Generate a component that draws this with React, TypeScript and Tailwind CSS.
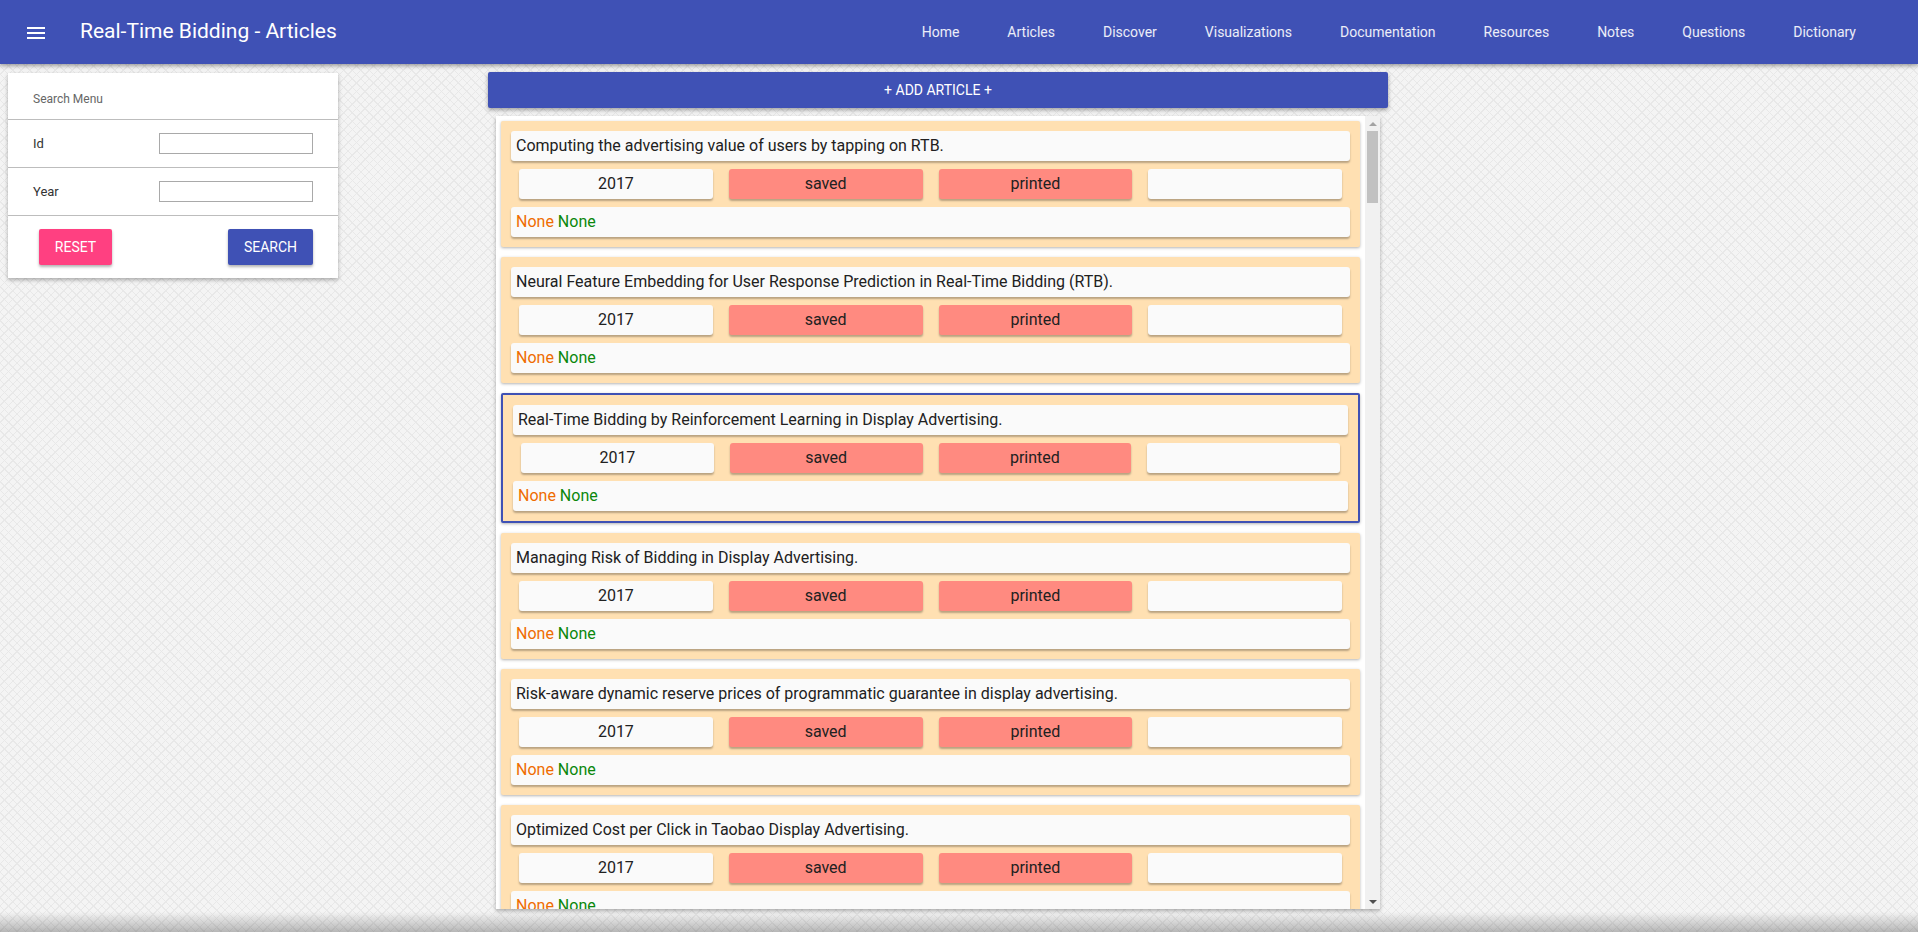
const navLinks = [
  'Home',
  'Articles',
  'Discover',
  'Visualizations',
  'Documentation',
  'Resources',
  'Notes',
  'Questions',
  'Dictionary',
];

const articles = [
  'Computing the advertising value of users by tapping on RTB.',
  'Neural Feature Embedding for User Response Prediction in Real-Time Bidding (RTB).',
  'Real-Time Bidding by Reinforcement Learning in Display Advertising.',
  'Managing Risk of Bidding in Display Advertising.',
  'Risk-aware dynamic reserve prices of programmatic guarantee in display advertising.',
  'Optimized Cost per Click in Taobao Display Advertising.',
  'Bid Landscape Forecasting in Online Ad Exchange Marketplace.',
];

const Box = ({ children }: { children?: React.ReactNode }) => (
  <div className="h-[30px] bg-[#fafafa] rounded-[3px] shadow-[0_2px_2px_rgba(0,0,0,0.28)] px-[5px] flex items-center text-[16px] text-[#212121] whitespace-nowrap overflow-hidden">
    {children}
  </div>
);

const Tile = ({ label, red }: { label?: string; red?: boolean }) => (
  <div
    className={
      'flex-1 mx-2 h-[30px] rounded-[3px] shadow-[0_2px_2px_rgba(0,0,0,0.28)] flex items-center justify-center text-[16px] text-[#212121] ' +
      (red ? 'bg-[#ff8a80]' : 'bg-[#fafafa]')
    }
  >
    {label}
  </div>
);

const ArticleCard = ({ title, active }: { title: string; active?: boolean }) => (
  <div
    className={
      'bg-[#ffe0b2] p-[10px] mb-[10px] rounded-[2px] shadow-[0_1px_3px_rgba(0,0,0,0.3)] ' +
      (active ? 'border-2 border-[#3f51b5]' : '')
    }
  >
    <Box>{title}</Box>
    <div className="flex my-2">
      <Tile label="2017" />
      <Tile label="saved" red />
      <Tile label="printed" red />
      <Tile />
    </div>
    <Box>
      <span className="text-[#ef6c00]">None</span>
      <span className="text-[#0b870b] ml-[4px]">None</span>
    </Box>
  </div>
);

const App = () => {
  return (
    <div className="h-[932px] overflow-hidden font-['Roboto',sans-serif] bg-[#f4f4f4] bg-[image:repeating-linear-gradient(45deg,#e8e8e8_0_1px,transparent_1px_6px),repeating-linear-gradient(-45deg,#e8e8e8_0_1px,transparent_1px_6px)]">
      {/* top bar */}
      <header className="relative z-10 h-[64px] bg-[#3f51b5] text-white flex items-center shadow-[0_2px_4px_rgba(0,0,0,0.35)]">
        <svg viewBox="0 0 24 24" className="w-6 h-6 ml-6 mt-[2px] fill-white">
          <path d="M3 18h18v-2H3v2zm0-5h18v-2H3v2zm0-7v2h18V6H3z" />
        </svg>
        <h1 className="ml-8 text-[21px]">Real-Time Bidding - Articles</h1>
        <nav className="ml-auto flex gap-12 pr-[62px] pt-[1px] text-[14px] text-white/90">
          {navLinks.map((l) => (
            <a key={l}>{l}</a>
          ))}
        </nav>
      </header>

      <div className="flex items-start">
        {/* search menu */}
        <div className="ml-2 mt-[9px] w-[330px] bg-white shadow-[0_2px_4px_rgba(0,0,0,0.3)]">
          <div className="h-[47px] pl-[25px] pt-[5px] flex items-center text-[12px] text-[#666] border-b border-[#bdbdbd]">
            Search Menu
          </div>
          <div className="h-[48px] pl-[25px] pr-[25px] flex items-center justify-between text-[13px] text-[#333] border-b border-[#bdbdbd]">
            <span>Id</span>
            <input className="w-[154px] h-[21px] border border-[#a9a9a9] bg-white" />
          </div>
          <div className="h-[48px] pl-[25px] pr-[25px] flex items-center justify-between text-[13px] text-[#333] border-b border-[#bdbdbd]">
            <span>Year</span>
            <input className="w-[154px] h-[21px] border border-[#a9a9a9] bg-white" />
          </div>
          <div className="h-[62px] pl-[31px] pr-[25px] flex items-center justify-between">
            <button className="w-[73px] h-9 rounded-[2px] bg-[#ff4081] text-white text-[14px] shadow-[0_2px_3px_rgba(0,0,0,0.3)]">
              RESET
            </button>
            <button className="w-[85px] h-9 rounded-[2px] bg-[#3f51b5] text-white text-[14px] shadow-[0_2px_3px_rgba(0,0,0,0.3)]">
              SEARCH
            </button>
          </div>
        </div>

        {/* article list */}
        <div className="ml-[150px] w-[900px]">
          <button className="mt-2 w-full h-9 bg-[#3f51b5] text-white text-[14px] rounded-[2px] shadow-[0_2px_4px_rgba(0,0,0,0.35)]">
            + ADD ARTICLE +
          </button>
          <div className="mt-2 mx-2 h-[793px] bg-white flex shadow-[0_2px_4px_rgba(0,0,0,0.3)]">
            <div className="flex-1 overflow-hidden p-[5px]">
              {articles.map((t, i) => (
                <ArticleCard key={i} title={t} active={i === 2} />
              ))}
            </div>
            {/* scrollbar */}
            <div className="w-[15px] bg-[#f1f1f1] flex flex-col items-center">
              <div className="h-[15px] flex items-center justify-center">
                <div className="w-0 h-0 border-x-[4px] border-x-transparent border-b-[4px] border-b-[#a3a3a3]" />
              </div>
              <div className="w-[11px] h-[72px] bg-[#c1c1c1]" />
              <div className="flex-1" />
              <div className="h-[15px] flex items-center justify-center">
                <div className="w-0 h-0 border-x-[4px] border-x-transparent border-t-[4px] border-t-[#505050]" />
              </div>
            </div>
          </div>
        </div>
      </div>

      <div className="fixed bottom-0 left-0 right-0 h-5 bg-linear-to-b from-transparent to-black/25 pointer-events-none" />
    </div>
  );
};

export default App;
